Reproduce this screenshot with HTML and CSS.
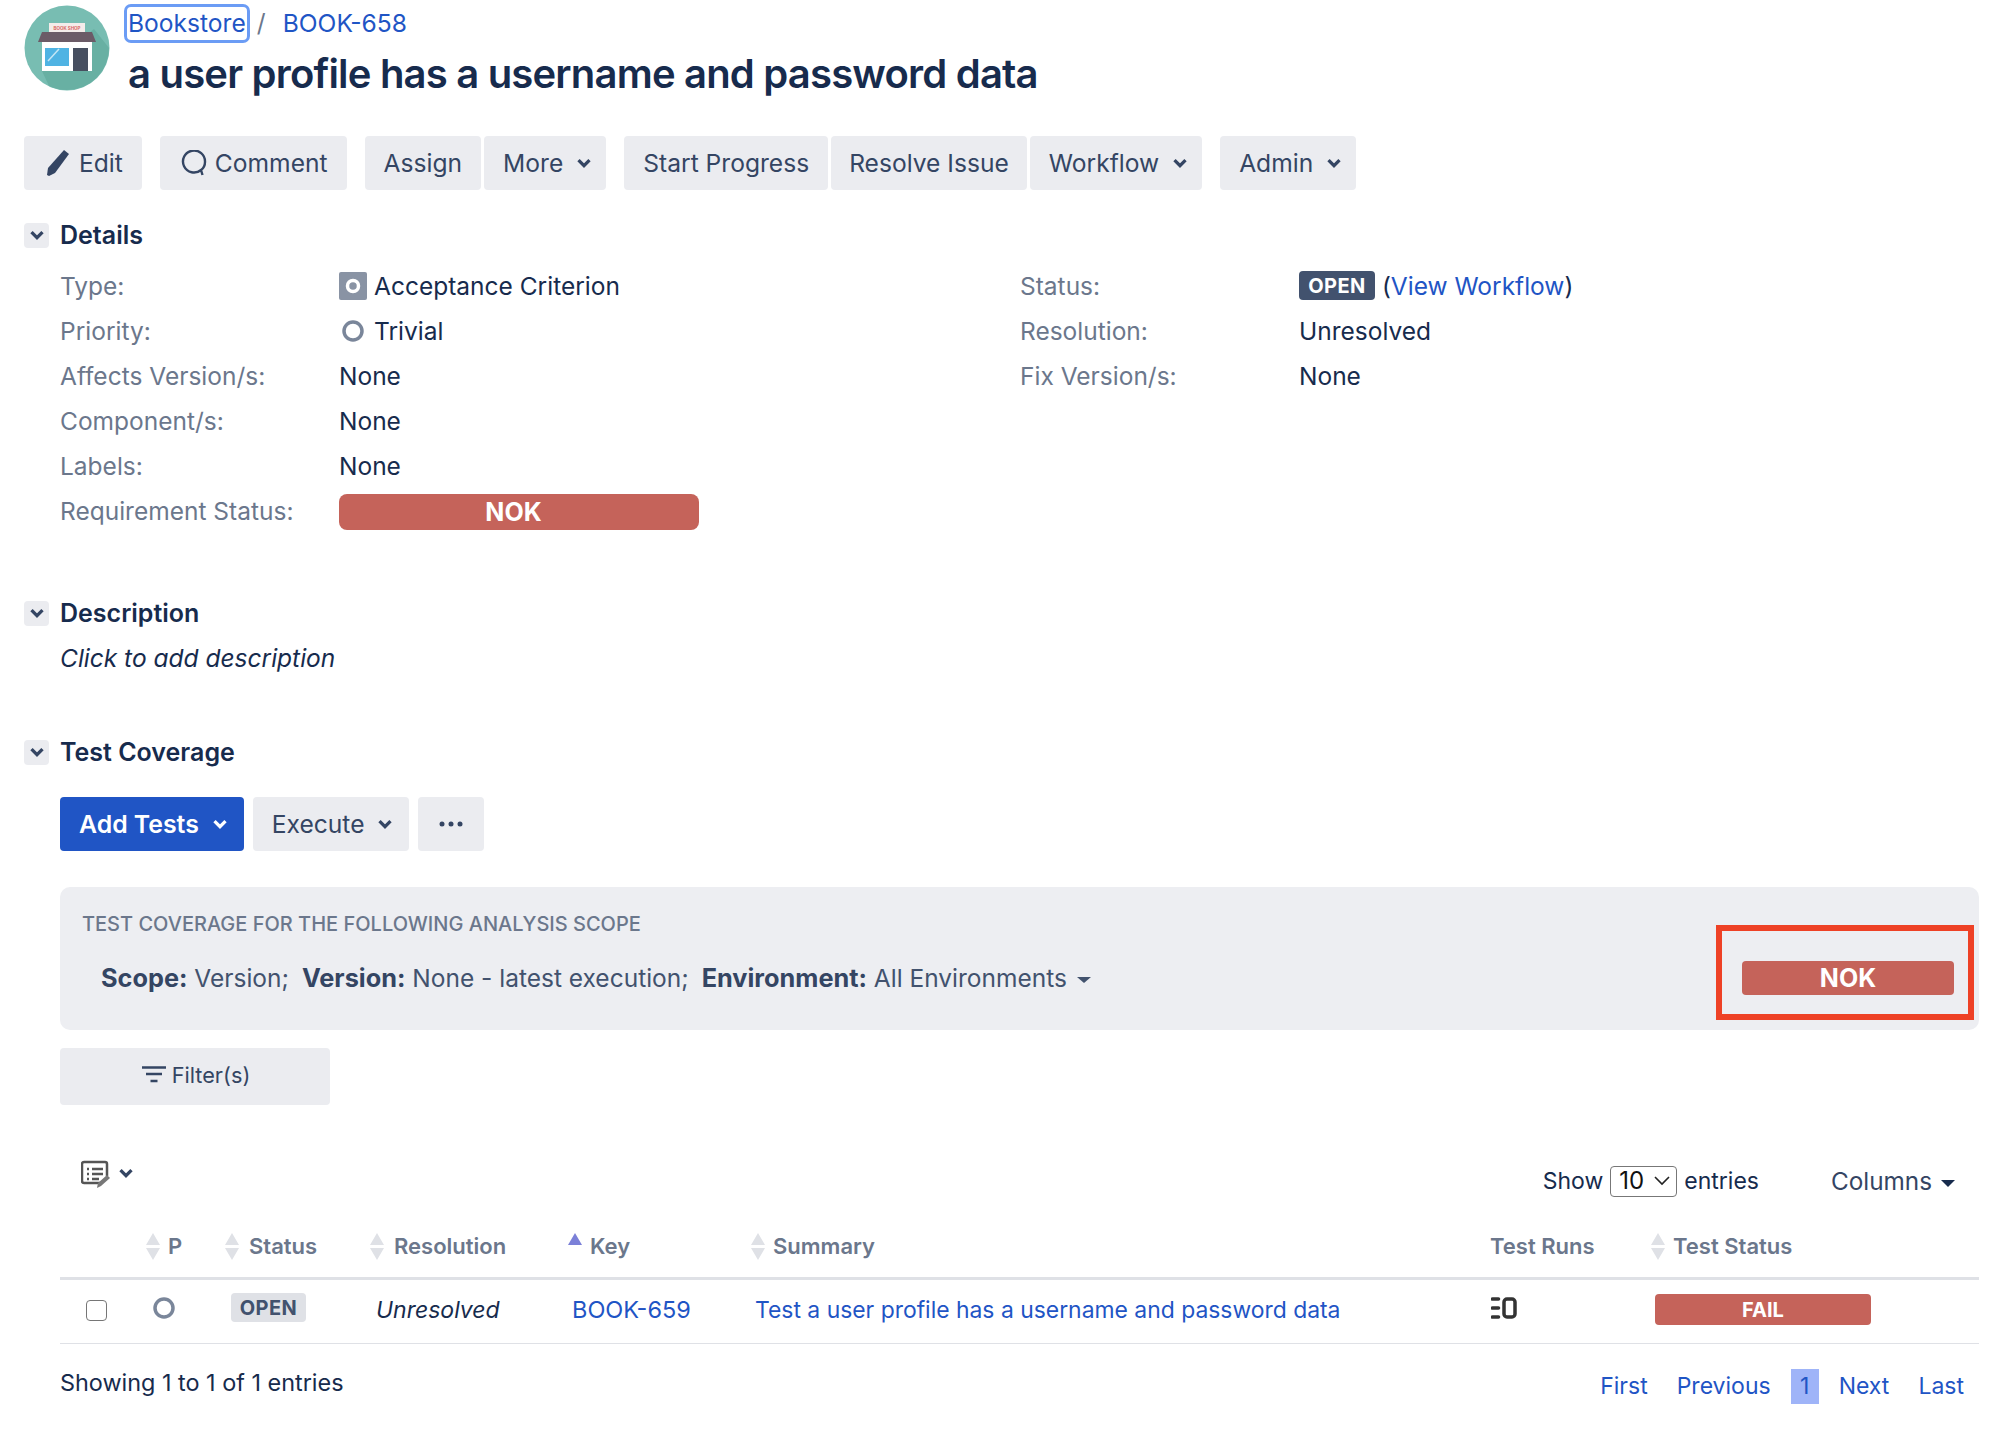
FILE: index.html
```html
<!DOCTYPE html>
<html lang="en">
<head>
<meta charset="utf-8">
<title>BOOK-658</title>
<link rel="stylesheet" href="styles.css">
</head>
<body>
<main class="page">
  <header class="issue-head">
    <svg class="avatar" viewBox="0 0 86 86" width="86" height="86">
      <ellipse cx="43" cy="43" rx="42.500" ry="42.500" fill="#78bdb2"/>
      <path d="M70 24 85 43a42 42 0 0 1-42 42 42 42 0 0 1-18-4L18 66z" fill="#68b0a3"/>
      <rect x="18" y="36" width="50" height="30" fill="#fff"/>
      <rect x="25" y="18" width="36" height="9" fill="#f4ecea"/>
      <text x="43" y="24.500" class="avatar-text" text-anchor="middle">BOOK SHOP</text>
      <path d="M14 37 18 27H68L72 37Z" fill="#6b5b67"/>
      <rect x="21" y="43" width="24" height="18" fill="#4fb3e3"/>
      <path d="M24 56 35 44" stroke="#c5e6f5" stroke-width="1.500"/>
      <rect x="49" y="43" width="15" height="23" fill="#474f60"/>
    </svg>
    <div class="head-text">
      <nav class="crumbs"><a class="link focused" href="#">Bookstore</a><span class="sep">/</span><a class="link" href="#">BOOK-658</a></nav>
      <h1 class="title">a user profile has a username and password data</h1>
    </div>
  </header>

  <div class="toolbar">
    <div class="btn-group"><button class="btn btn-edit"><svg class="ic" width="24" height="28" viewBox="0 0 24 28"><path d="M18 1l5 4L9 24l-6 3-2-1 1-7z" fill="#344563"/></svg>Edit</button></div>
    <div class="btn-group"><button class="btn btn-comment"><svg class="ic" width="26" height="26" viewBox="0 0 26 26"><path d="M20 20A11 11 0 1 1 24 12c0 3-1 6-4 8l1.500 5" fill="none" stroke="#344563" stroke-width="2.400"/></svg>Comment</button></div>
    <div class="btn-group"><button class="btn">Assign</button><button class="btn">More<svg class="chev" width="16" height="11" viewBox="0 0 14 10"><path d="M2 2l5 5 5-5" fill="none" stroke="#344563" stroke-width="3"/></svg></button></div>
    <div class="btn-group"><button class="btn">Start Progress</button><button class="btn btn-resolve">Resolve Issue</button><button class="btn">Workflow<svg class="chev" width="16" height="11" viewBox="0 0 14 10"><path d="M2 2l5 5 5-5" fill="none" stroke="#344563" stroke-width="3"/></svg></button></div>
    <div class="btn-group"><button class="btn">Admin<svg class="chev" width="16" height="11" viewBox="0 0 14 10"><path d="M2 2l5 5 5-5" fill="none" stroke="#344563" stroke-width="3"/></svg></button></div>
  </div>

  <section class="module details">
    <h2 class="mod-head"><span class="twisty"><svg width="16" height="11" viewBox="0 0 14 10"><path d="M2 2l5 5 5-5" fill="none" stroke="#344563" stroke-width="3"/></svg></span>Details</h2>
    <div class="fields">
      <div class="col">
        <div class="field"><span class="lbl">Type:</span><span class="val"><svg class="type-ic" width="28" height="28" viewBox="0 0 28 28"><rect width="28" height="28" rx="2" fill="#8993a4"/><circle cx="14" cy="14" r="5.500" fill="none" stroke="#fff" stroke-width="3.500"/></svg>Acceptance Criterion</span></div>
        <div class="field"><span class="lbl">Priority:</span><span class="val"><svg class="type-ic" width="28" height="28" viewBox="0 0 28 28"><circle cx="14" cy="14" r="9" fill="none" stroke="#7a869a" stroke-width="3.500"/></svg>Trivial</span></div>
        <div class="field"><span class="lbl">Affects Version/s:</span><span class="val">None</span></div>
        <div class="field"><span class="lbl">Component/s:</span><span class="val">None</span></div>
        <div class="field"><span class="lbl">Labels:</span><span class="val">None</span></div>
        <div class="field"><span class="lbl">Requirement Status:</span><span class="val"><span class="bar bar-req">NOK</span></span></div>
      </div>
      <div class="col">
        <div class="field"><span class="lbl">Status:</span><span class="val"><span class="lozenge dark">OPEN</span> (<a class="link" href="#">View Workflow</a>)</span></div>
        <div class="field"><span class="lbl">Resolution:</span><span class="val">Unresolved</span></div>
        <div class="field"><span class="lbl">Fix Version/s:</span><span class="val">None</span></div>
      </div>
    </div>
  </section>

  <section class="module description">
    <h2 class="mod-head"><span class="twisty"><svg width="16" height="11" viewBox="0 0 14 10"><path d="M2 2l5 5 5-5" fill="none" stroke="#344563" stroke-width="3"/></svg></span>Description</h2>
    <p class="desc">Click to add description</p>
  </section>

  <section class="module coverage">
    <h2 class="mod-head"><span class="twisty"><svg width="16" height="11" viewBox="0 0 14 10"><path d="M2 2l5 5 5-5" fill="none" stroke="#344563" stroke-width="3"/></svg></span>Test Coverage</h2>
    <div class="cov-body">
      <div class="cov-actions">
        <button class="btn primary">Add Tests<svg class="chev" width="16" height="11" viewBox="0 0 14 10"><path d="M2 2l5 5 5-5" fill="none" stroke="#fff" stroke-width="3"/></svg></button>
        <button class="btn">Execute<svg class="chev" width="16" height="11" viewBox="0 0 14 10"><path d="M2 2l5 5 5-5" fill="none" stroke="#344563" stroke-width="3"/></svg></button>
        <button class="btn dots"><svg width="24" height="6" viewBox="0 0 24 6"><circle cx="3" cy="3" r="2.500" fill="#344563"/><circle cx="12" cy="3" r="2.500" fill="#344563"/><circle cx="21" cy="3" r="2.500" fill="#344563"/></svg></button>
      </div>
      <div class="scope-panel">
        <div class="scope-text">
          <div class="scope-title">TEST COVERAGE FOR THE FOLLOWING ANALYSIS SCOPE</div>
          <div class="scope-line"><b>Scope:</b> Version;<b class="sp">Version:</b> None - latest execution;<b class="sp">Environment:</b> All Environments<span class="caret small"></span></div>
        </div>
        <div class="red-box"><span class="bar bar-scope">NOK</span></div>
      </div>
      <button class="btn filter"><svg class="ic-filter" width="24" height="18" viewBox="0 0 24 18"><path d="M0 1.500h24M4 8h16M8.500 15h7" stroke="#344563" stroke-width="2.500" fill="none"/></svg>Filter(s)</button>

      <div class="table-tools">
        <div class="bulk">
          <svg width="30" height="30" viewBox="0 0 30 30"><path d="M21 23H3a2 2 0 0 1-2-2V4a2 2 0 0 1 2-2h21a2 2 0 0 1 2 2v12" fill="none" stroke="#555" stroke-width="2.500"/><path d="M6 9h2M11 9h11M6 14h2M11 14h11M6 19h2M11 19h7" stroke="#555" stroke-width="2.500"/><path d="M16 28l1-5 9-8 3 3-9 8z" fill="#777"/></svg>
          <svg class="chev" width="16" height="11" viewBox="0 0 14 10"><path d="M2 2l5 5 5-5" fill="none" stroke="#344563" stroke-width="3"/></svg>
        </div>
        <div class="len-ctl">
          <span>Show</span><span class="fake-select">10<svg width="16" height="10" viewBox="0 0 16 10"><path d="M1 1l7 7 7-7" fill="none" stroke="#222" stroke-width="1.600"/></svg></span><span>entries</span>
          <span class="columns">Columns<span class="caret"></span></span>
        </div>
      </div>

      <table class="grid">
        <colgroup><col class="c-check"><col class="c-p"><col class="c-status"><col class="c-res"><col class="c-key"><col class="c-sum"><col class="c-runs"><col class="c-ts"></colgroup>
        <thead>
          <tr>
            <th></th>
            <th><span class="th-in"><svg class="sort" width="14" height="27" viewBox="0 0 14 27"><path d="M7 0l7 12H0zM7 27l7-12H0z" fill="#dfe1e6"/></svg>P</span></th>
            <th><span class="th-in th-gap"><svg class="sort" width="14" height="27" viewBox="0 0 14 27"><path d="M7 0l7 12H0zM7 27l7-12H0z" fill="#dfe1e6"/></svg>Status</span></th>
            <th><span class="th-in th-gap"><svg class="sort" width="14" height="27" viewBox="0 0 14 27"><path d="M7 0l7 12H0zM7 27l7-12H0z" fill="#dfe1e6"/></svg>Resolution</span></th>
            <th><span class="th-in"><svg class="sort" width="14" height="27" viewBox="0 0 14 27"><path d="M7 0l7 12H0z" fill="#7b80d8"/></svg>Key</span></th>
            <th><span class="th-in"><svg class="sort" width="14" height="27" viewBox="0 0 14 27"><path d="M7 0l7 12H0zM7 27l7-12H0z" fill="#dfe1e6"/></svg>Summary</span></th>
            <th class="th-plain">Test Runs</th>
            <th><span class="th-in"><svg class="sort" width="14" height="27" viewBox="0 0 14 27"><path d="M7 0l7 12H0zM7 27l7-12H0z" fill="#dfe1e6"/></svg>Test Status</span></th>
          </tr>
        </thead>
        <tbody>
          <tr>
            <td class="td-check"><span class="check"></span></td>
            <td class="td-p"><svg class="cell-ic" width="24" height="24" viewBox="0 0 24 24"><circle cx="12" cy="12" r="9" fill="none" stroke="#7a869a" stroke-width="3.500"/></svg></td>
            <td class="td-wide"><span class="lozenge light">OPEN</span></td>
            <td class="td-wide"><em>Unresolved</em></td>
            <td><a class="link key-link" href="#">BOOK-659</a></td>
            <td><a class="link sum-link" href="#">Test a user profile has a username and password data</a></td>
            <td class="td-runs"><svg class="cell-ic" width="26" height="22" viewBox="0 0 26 22"><path d="M1.500 2h6M1.500 11h6M1.500 20h6" stroke="#333" stroke-width="3.600" stroke-linecap="round"/><rect x="13" y="2" width="11" height="18" rx="3" fill="none" stroke="#333" stroke-width="3.500"/></svg></td>
            <td><span class="bar bar-fail">FAIL</span></td>
          </tr>
        </tbody>
      </table>

      <div class="table-foot">
        <span class="info">Showing 1 to 1 of 1 entries</span>
        <nav class="pager"><a class="link" href="#">First</a><a class="link" href="#">Previous</a><a class="link current" href="#">1</a><a class="link" href="#">Next</a><a class="link" href="#">Last</a></nav>
      </div>
    </div>
  </section>
</main>
</body>
</html>
```
FILE: styles.css
```css
* { box-sizing: border-box; }
html, body { margin: 0; padding: 0; background: #fff; }
body { font-family: Inter, "Liberation Sans", sans-serif; font-size: 24.5px; line-height: 34px; color: #172b4d; }
.page { padding: 5px 35px 0 24px; width: 2014px; height: 1454px; overflow: hidden; }
.link { color: #1f55c5; text-decoration: none; }

.issue-head { display: flex; align-items: flex-start; height: 131px; }
.avatar { flex: none; }
.avatar-text { font-size: 4.5px; font-weight: 700; fill: #d9655f; }
.head-text { margin-left: 16px; }
.crumbs { display: flex; align-items: center; height: 36px; font-size: 24.6px; }
.focused { outline: 3px solid #6b9cf5; outline-offset: -1px; border-radius: 5px; padding: 0 2px; height: 35px; line-height: 35px; }
.sep { color: #6b778c; margin: 0 17px 0 9px; }
.title { margin: 11px 0 0 2px; font-size: 40px; line-height: 44px; font-weight: 600; letter-spacing: -0.8px; }

.toolbar { display: flex; gap: 18px; }
.btn-group { display: flex; gap: 3px; }
.btn { display: inline-flex; align-items: center; justify-content: center; height: 54px; padding: 0 19px; border: 0; border-radius: 4px; background: #ebecf0; color: #344563; font: inherit; font-size: 24.6px; white-space: nowrap; }
.btn-edit { padding: 0 19px 0 22px; }
.btn-edit .ic { margin-right: 9px; }
.btn-comment { padding: 0 19px 0 21px; }
.btn-resolve { padding: 0 18px; }
.ic { margin-right: 8px; }
.chev { margin-left: 13px; margin-right: -5px; }

.mod-head { display: flex; align-items: center; gap: 11px; margin: 0; font-size: 25px; line-height: 30px; font-weight: 600; height: 30px; }
.twisty { display: flex; align-items: center; justify-content: center; width: 25px; height: 25px; background: #ebecf0; border-radius: 4px; }
.details { margin-top: 30px; }
.fields { display: grid; grid-template-columns: 960px 1fr; padding-left: 36px; margin-top: 13px; }
.field { display: flex; height: 45px; align-items: center; }
.lbl { flex: none; width: 279px; color: #6b778c; }
.val { display: flex; align-items: center; white-space: pre; }
.type-ic { margin-right: 7px; }

.bar { display: flex; align-items: center; justify-content: center; background: #c5635a; color: #fff; font-weight: 700; }
.bar-req { width: 360px; height: 36px; border-radius: 8px; margin-top: 2px; padding-right: 11px; font-size: 25px; }
.bar-scope { width: 212px; height: 34px; border-radius: 4px; font-size: 25px; }
.bar-fail { width: 216px; height: 31px; border-radius: 4px; font-size: 20px; }

.lozenge { display: inline-flex; align-items: center; justify-content: center; height: 29px; border-radius: 4px; font-size: 20px; font-weight: 700; letter-spacing: 0.4px; }
.dark { background: #42526e; color: #fff; width: 76px; }
.light { background: #dfe1e6; color: #42526e; width: 75px; position: relative; top: -3px; }

.description { margin-top: 65px; }
.desc { margin: 13px 0 0 36px; font-style: italic; }
.coverage { margin-top: 62px; }
.cov-body { padding-left: 36px; }
.cov-actions { display: flex; gap: 9px; margin-top: 30px; }
.cov-actions .chev { margin-right: -3px; }
.primary { background: #2055c5; color: #fff; font-weight: 600; font-size: 24.8px; }
.dots { width: 66px; padding: 0; }
.cov-actions .dots { padding: 0; }

.scope-panel { display: flex; justify-content: space-between; height: 143px; margin-top: 36px; background: #edeef2; border-radius: 10px; padding: 0 5px 10px 22px; }
.scope-title { margin-top: 20px; font-size: 20px; font-weight: 500; line-height: 34px; color: #6b778c; text-transform: uppercase; }
.scope-line { margin: 20px 0 0 19px; color: #42526e; font-size: 24.5px; }
.scope-line b { font-weight: 700; font-size: 25.300px; color: #344563; }
.scope-line .sp { margin-left: 13px; }
.red-box { display: flex; justify-content: center; align-items: flex-end; width: 258px; height: 95px; margin-top: 38px; padding: 0 0 19px 6px; border: 6px solid #ee4126; }
.caret { display: inline-block; width: 0; height: 0; margin-left: 9px; border: 7px solid transparent; border-top-color: #172b4d; border-bottom: 0; vertical-align: middle; }
.small { width: 0; margin-left: 10px; border-width: 6px 7px 0; border-top-color: #42526e; }

.filter { width: 270px; height: 57px; margin-top: 18px; padding: 0 0 3px 2px; font-size: 21.700px; }
.ic-filter { margin-right: 6px; }

.table-tools { display: flex; justify-content: space-between; align-items: flex-start; margin-top: 40px; height: 71px; }
.bulk { display: flex; align-items: center; margin: 15px 0 0 21px; }
.bulk .chev { margin-left: 7px; margin-right: 0; margin-top: -3px; }
.len-ctl { display: flex; align-items: center; margin: 19px 24px 0 0; height: 34px; font-size: 23px; }
.fake-select { display: flex; align-items: center; justify-content: space-between; width: 67px; height: 31px; margin: 0 7px 0 7px; padding: 0 6px 0 8px; border: 1px solid #777; border-radius: 4px; color: #111; font-size: 24px; }
.columns { margin-left: 72px; color: #344563; font-size: 24.300px; }

.grid { width: 1919px; border-collapse: collapse; table-layout: fixed; font-size: 23px; }
.c-check { width: 80px; } .c-p { width: 79px; } .c-status { width: 145px; } .c-res { width: 198px; }
.c-key { width: 183px; } .c-sum { width: 738px; } .c-runs { width: 162px; } .c-ts { width: 334px; }
th { height: 62px; padding: 0 0 0 6px; border-bottom: 3px solid #dfe1e6; color: #6b778c; font-size: 22px; font-weight: 600; text-align: left; }
.th-in { display: flex; align-items: center; gap: 8px; }
.th-gap { gap: 10px; }
.sort { flex: none; }
.th-plain { padding-left: 7px; }
td { height: 65px; padding: 0 0 3px 10px; border-bottom: 1px solid #dfe1e6; }
.td-check { padding-left: 26px; }
.td-p { padding-left: 12px; }
.td-wide { padding-left: 12px; }
.td-runs { padding-left: 8px; }
.key-link { font-size: 23.500px; }
.sum-link { font-size: 22.900px; }
.cell-ic { display: block; margin-top: -3px; }
.check { display: block; width: 21px; height: 21px; margin-top: 2px; border: 1px solid #767676; border-radius: 4px; background: #fff; }

.table-foot { display: flex; justify-content: space-between; align-items: flex-start; font-size: 23.400px; }
.info { margin-top: 22px; }
.pager { display: flex; gap: 29px; margin: 25px 15px 0 0; height: 35px; font-size: 23px; }
.pager .link { display: block; line-height: 35px; }
.pager .current { width: 28px; margin: 0 -9px; text-align: center; background: #9fb4f8; }
```
